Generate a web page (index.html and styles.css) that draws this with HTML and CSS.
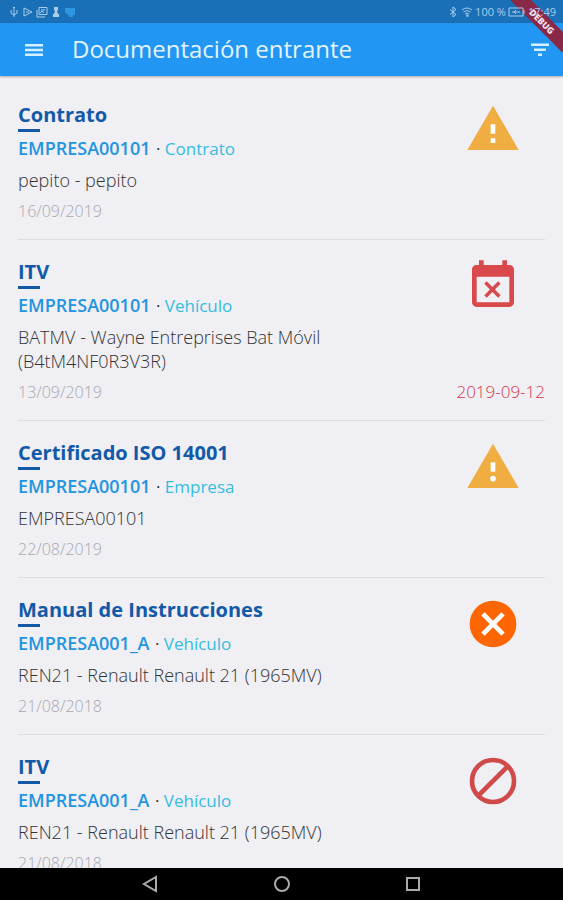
FILE: index.html
```html
<!DOCTYPE html>
<html lang="es">
  <head>
    <meta charset="utf-8" />
    <meta name="viewport" content="width=device-width, initial-scale=1" />
    <title>Documentación entrante</title>
    <link rel="stylesheet" href="styles.css" />
  </head>
  <body>
    <div class="status_bar">
      <div class="status_icons">
        <!-- usb -->
        <svg viewBox="0 0 12 12"><path d="M6 1v10M3 4v3l3 2 3-2V4M5 2l1-1 1 1" /></svg>
        <!-- play -->
        <svg viewBox="0 0 12 12"><path d="M2 2l8 4-8 4zM4 6h3" /></svg>
        <!-- gallery -->
        <svg viewBox="0 0 12 12"><path d="M3 1.500h8v7H3zM1 4v7h8M5 4h4M4 7l2-2 2 2" /></svg>
        <!-- person -->
        <svg viewBox="0 0 12 12"><path class="solid" d="M4 1h4v3l-1 1 1 3h1v3H3V8h1l1-3-1-1z" /></svg>
        <svg class="tv" viewBox="0 0 12 12"><path class="solid" d="M1 2h10v7H9v2H5V9H3V7H1z" /></svg>
      </div>
      <div class="status_info">
        <svg viewBox="0 0 12 12"><path d="M3 3.500l6 5L6 11V1l3 2.500-6 5" /></svg>
        <svg viewBox="0 0 12 12"><path d="M1 4q5-4 10 0M2.500 6q3.500-3 7 0M4 8q2-2 4 0" /><path class="solid" d="M6 8l2 2-2 1-1-1z" /></svg>
        <span>100 %</span>
        <svg class="battery" viewBox="0 0 18 12"><path d="M1 2h14v8H1zM16 4v4M4 6h8M8 4l-2 2 2 2" /></svg>
        <span class="clock">17:49</span>
      </div>
    </div>

    <header class="app_bar">
      <button class="icon_btn" aria-label="Menú">
        <svg viewBox="0 0 24 24"><path d="M3 18h18v-2.500H3zm0-4.750h18v-2.500H3zm0-7.250v2.500h18V6H3z" /></svg>
      </button>
      <h1>Documentación entrante</h1>
      <button class="icon_btn" aria-label="Filtrar">
        <svg viewBox="0 0 24 24"><path d="M10 18h4v-2.500h-4zM3 5.500V8h18V5.500H3zm3 7.500h12v-2.500H6z" /></svg>
      </button>
    </header>

    <div class="debug"><span>DEBUG</span></div>

    <ul class="docs">
      <li class="doc">
        <div class="info">
          <h2>Contrato</h2>
          <p class="company"><b>EMPRESA00101</b> · <span>Contrato</span></p>
          <p class="desc">pepito - pepito</p>
          <p class="date">16/09/2019</p>
        </div>
        <div class="state">
          <svg class="warning" viewBox="0 0 24 24"><path d="M1 21h22L12 2z" /><path class="mark" d="M11 10h2v4h-2zM11 16h2v2h-2z" /></svg>
        </div>
      </li>

      <li class="doc">
        <div class="info">
          <h2>ITV</h2>
          <p class="company"><b>EMPRESA00101</b> · <span>Vehículo</span></p>
          <p class="desc">BATMV - Wayne Entreprises Bat Móvil (B4tM4NF0R3V3R)</p>
          <p class="date">13/09/2019</p>
        </div>
        <div class="state">
          <svg class="expired" viewBox="0 0 24 24"><path d="M9.310 17l2.440-2.440L14.190 17l1.060-1.060-2.440-2.440 2.440-2.440L14.190 10l-2.440 2.440L9.310 10l-1.060 1.060 2.440 2.440-2.440 2.440L9.310 17zM19 3h-1V1h-2v2H8V1H6v2H5c-1.110 0-1.990.9-1.990 2L3 19c0 1.100.89 2 2 2h14c1.100 0 2-.9 2-2V5c0-1.100-.9-2-2-2zm0 16H5V8h14v11z" /></svg>
          <p class="limit">2019-09-12</p>
        </div>
      </li>

      <li class="doc">
        <div class="info">
          <h2>Certificado ISO 14001</h2>
          <p class="company"><b>EMPRESA00101</b> · <span>Empresa</span></p>
          <p class="desc">EMPRESA00101</p>
          <p class="date">22/08/2019</p>
        </div>
        <div class="state">
          <svg class="warning" viewBox="0 0 24 24"><path d="M1 21h22L12 2z" /><path class="mark" d="M11 10h2v4h-2z" /><circle class="mark" cx="12" cy="17" r="1.200" /></svg>
        </div>
      </li>

      <li class="doc">
        <div class="info">
          <h2>Manual de Instrucciones</h2>
          <p class="company"><b>EMPRESA001_A</b> · <span>Vehículo</span></p>
          <p class="desc">REN21 - Renault Renault 21 (1965MV)</p>
          <p class="date">21/08/2018</p>
        </div>
        <div class="state">
          <svg class="rejected" viewBox="0 0 24 24"><circle cx="12" cy="12" r="10" /><path class="mark" d="M17 8.410L15.590 7 12 10.590 8.410 7 7 8.410 10.590 12 7 15.590 8.410 17 12 13.410 15.590 17 17 15.590 13.410 12z" /></svg>
        </div>
      </li>

      <li class="doc">
        <div class="info">
          <h2>ITV</h2>
          <p class="company"><b>EMPRESA001_A</b> · <span>Vehículo</span></p>
          <p class="desc">REN21 - Renault Renault 21 (1965MV)</p>
          <p class="date">21/08/2018</p>
        </div>
        <div class="state">
          <svg class="blocked" viewBox="0 0 24 24"><circle cx="12" cy="12" r="9" /><path d="M5.500 18.500l13-13" /></svg>
        </div>
      </li>
    </ul>

    <nav class="nav_bar">
      <button aria-label="Atrás">
        <svg viewBox="0 0 20 20"><path d="M16 3v14L4 10z" /></svg>
      </button>
      <button aria-label="Inicio">
        <svg viewBox="0 0 20 20"><circle cx="10" cy="10" r="7" /></svg>
      </button>
      <button aria-label="Recientes">
        <svg viewBox="0 0 20 20"><path d="M4 4h12v12H4z" /></svg>
      </button>
    </nav>
  </body>
</html>
```

FILE: styles.css
```css
* {
  margin: 0px;
  padding: 0px;
  box-sizing: border-box;
}

body {
  height: 100vh;
  display: flex;
  flex-direction: column;
  overflow: hidden;
  position: relative;
  background: #efeff4;
  color: #333;
  font-family: "Open Sans", "Noto Sans", sans-serif;
}

button {
  background: none;
  border: none;
  cursor: pointer;
}

/* status bar */
.status_bar {
  height: 23px;
  flex: none;
  display: flex;
  justify-content: space-between;
  align-items: center;
  padding: 0px 7px 0px 8px;
  background: #1a70b7;
  color: #a9cdea;
  font-size: 11px;
  line-height: 16px;
}
.status_icons,
.status_info {
  display: flex;
  align-items: center;
  gap: 2px;
}
.status_info {
  position: relative;
  z-index: 2;
}
.status_bar svg {
  width: 12px;
  height: 12px;
  fill: none;
  stroke: #a9cdea;
}
.status_bar .solid {
  fill: #a9cdea;
  stroke: none;
}
.status_bar .tv .solid {
  fill: #2f97e0;
}
.status_bar .battery {
  width: 18px;
}

/* app bar */
.app_bar {
  height: 53px;
  flex: none;
  display: flex;
  align-items: center;
  padding: 0px 11px 0px 22px;
  background: #2196f3;
  box-shadow: 0px 1px 2px rgba(0, 0, 0, 0.3);
}
.app_bar h1 {
  flex: 1;
  margin-left: 26px;
  padding-bottom: 2px;
  color: #e3f4ff;
  font-size: 24px;
  line-height: 36px;
  font-weight: 400;
}
.icon_btn {
  width: 24px;
  height: 24px;
}
.icon_btn svg {
  display: block;
  width: 24px;
  height: 24px;
  fill: #d3f1ff;
}

/* corner ribbon */
.debug {
  position: absolute;
  top: 0px;
  right: 0px;
  width: 52px;
  height: 52px;
  overflow: hidden;
}
.debug span {
  position: absolute;
  top: 14px;
  left: -19px;
  width: 100px;
  background: #8a2848;
  color: #f3dfe6;
  font-size: 9px;
  line-height: 15px;
  font-weight: 800;
  text-align: center;
  transform: rotate(45deg);
}

/* documents */
.docs {
  flex: 1;
  min-height: 0px;
  overflow: hidden;
  padding: 7px 18px 0px;
  list-style-type: none;
}
.doc {
  display: flex;
  padding: 18px 0px;
  border-bottom: 1px solid #dddde2;
}
.info {
  flex: 1;
}
.doc h2 {
  color: #1259a8;
  font-size: 20px;
  line-height: 28px;
  font-weight: 700;
}
.doc h2::after {
  content: "";
  display: block;
  width: 22px;
  height: 3px;
  background: #1259a8;
}
.company {
  margin-top: 5px;
  font-size: 17px;
  line-height: 24px;
}
.company b {
  margin-right: 1px;
  color: #2394e0;
  font-size: 18px;
  line-height: 20px;
  font-weight: 600;
}
.company span {
  color: #35bde0;
}
.desc {
  margin-top: 7px;
  font-size: 18px;
  line-height: 24px;
  font-weight: 300;
}
.date,
.limit {
  line-height: 20px;
  font-weight: 300;
}
.date {
  margin-top: 9px;
  color: #a8a8ae;
  font-size: 16px;
}
.limit {
  align-self: flex-end;
  color: #d3364a;
  font-size: 17px;
}

.state {
  width: 104px;
  display: flex;
  flex-direction: column;
  justify-content: space-between;
  align-items: center;
}
.state svg {
  width: 56px;
  height: 56px;
}
.warning {
  fill: #f0ad42;
}
.expired {
  fill: #d9484b;
}
.rejected {
  fill: #ff6500;
}
.blocked {
  fill: none;
  stroke: #d04a4a;
  stroke-width: 2;
}
.state .mark {
  fill: #fff;
}

/* android navigation */
.nav_bar {
  height: 32px;
  flex: none;
  display: grid;
  grid-template-columns: repeat(3, 1fr);
  padding: 0px 15%;
  background: #000;
}
.nav_bar svg {
  display: block;
  width: 20px;
  height: 20px;
  margin: 0px auto;
  fill: none;
  stroke: #aaa;
  stroke-width: 2;
}
```
